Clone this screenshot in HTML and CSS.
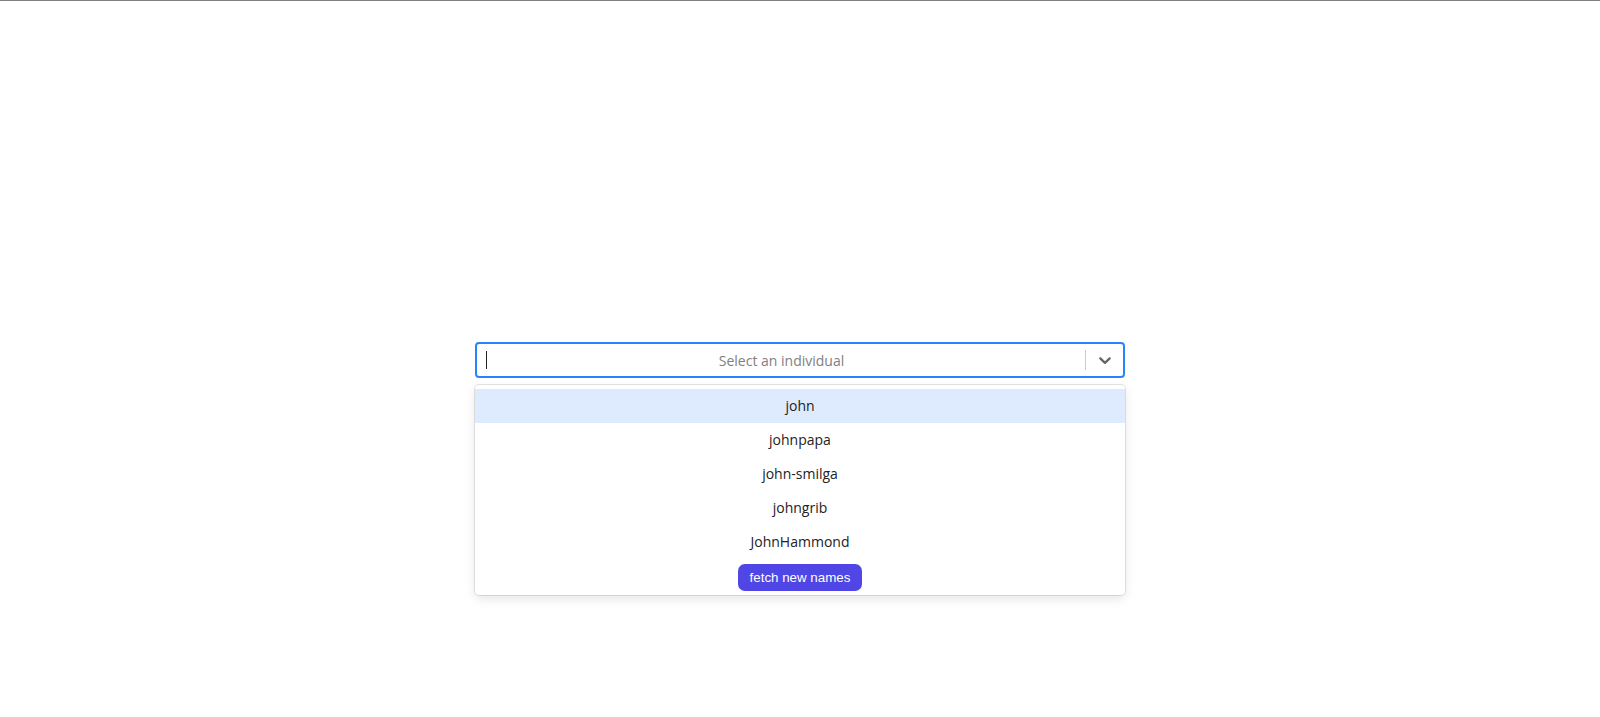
FILE: index.html
```html
<!DOCTYPE html>
<html lang="en">
<head>
    <meta charset="UTF-8">
    <meta name="viewport" content="width=device-width, initial-scale=1.0">
    <title>Select an individual</title>
    <link rel="stylesheet" href="styles.css">
</head>
<body>
    <div class="page">
        <div class="picker">
            <div class="control">
                <div class="value">
                    <span class="caret"></span>
                    <span class="placeholder">Select an individual</span>
                </div>
                <span class="separator"></span>
                <div class="indicator">
                    <svg width="20" height="20" viewBox="0 0 20 20" aria-hidden="true">
                        <path d="M4.516 7.548c0.436-0.446 1.043-0.481 1.576 0l3.908 3.747 3.908-3.747c0.533-0.481 1.141-0.446 1.574 0 0.436 0.445 0.408 1.197 0 1.615-0.406 0.418-4.695 4.502-4.695 4.502-0.217 0.223-0.502 0.335-0.787 0.335s-0.57-0.112-0.789-0.335c0 0-4.287-4.084-4.695-4.502s-0.436-1.170 0-1.615z"></path>
                    </svg>
                </div>
            </div>
            <div class="menu">
                <div class="option focused">john</div>
                <div class="option">johnpapa</div>
                <div class="option">john-smilga</div>
                <div class="option">johngrib</div>
                <div class="option">JohnHammond</div>
                <div class="menu-footer">
                    <button class="fetch-button">fetch new names</button>
                </div>
            </div>
        </div>
    </div>
</body>
</html>
```

FILE: styles.css
```css
* {
    box-sizing: border-box;
}
body {
    margin: 0;
    background-color: #fff;
    font-family: "Open Sans", "Noto Sans", Arial, sans-serif;
    font-size: 14px;
    color: #333;
}
.page {
    height: 100vh;
    border-top: 1px solid #808080;
    padding-top: 341px;
}
.picker {
    width: 650px;
    margin: 0 auto;
}
.control {
    display: flex;
    align-items: center;
    height: 36px;
    border: 2px solid #2684ff;
    border-radius: 4px;
    background-color: #fff;
}
.value {
    flex: 1;
    display: flex;
    align-items: center;
    padding: 0 9px;
}
.caret {
    width: 0;
    height: 18px;
    border-left: 1.5px solid #222;
}
.placeholder {
    flex: 1;
    text-align: center;
    color: #808080;
}
.separator {
    width: 1px;
    height: 20px;
    background-color: #ccc;
}
.indicator {
    display: flex;
    padding: 0 8px 0 9px;
}
.indicator svg {
    fill: #666;
}
.menu {
    margin-top: 7px;
    padding: 4px 0;
    border-radius: 4px;
    background-color: #fff;
    box-shadow: 0 0 0 1px rgba(0, 0, 0, 0.1), 0 4px 11px rgba(0, 0, 0, 0.1);
}
.option {
    height: 34px;
    line-height: 34px;
    text-align: center;
    color: #222;
}
.option.focused {
    background-color: #deebff;
}
.menu-footer {
    display: flex;
    justify-content: center;
    padding-top: 5px;
}
.fetch-button {
    height: 27px;
    padding: 0 12px;
    border: none;
    border-radius: 7px;
    background-color: #4f46e5;
    color: #fff;
    font-family: "Liberation Sans", Arial, sans-serif;
    font-size: 13.333px;
    cursor: pointer;
}
```
